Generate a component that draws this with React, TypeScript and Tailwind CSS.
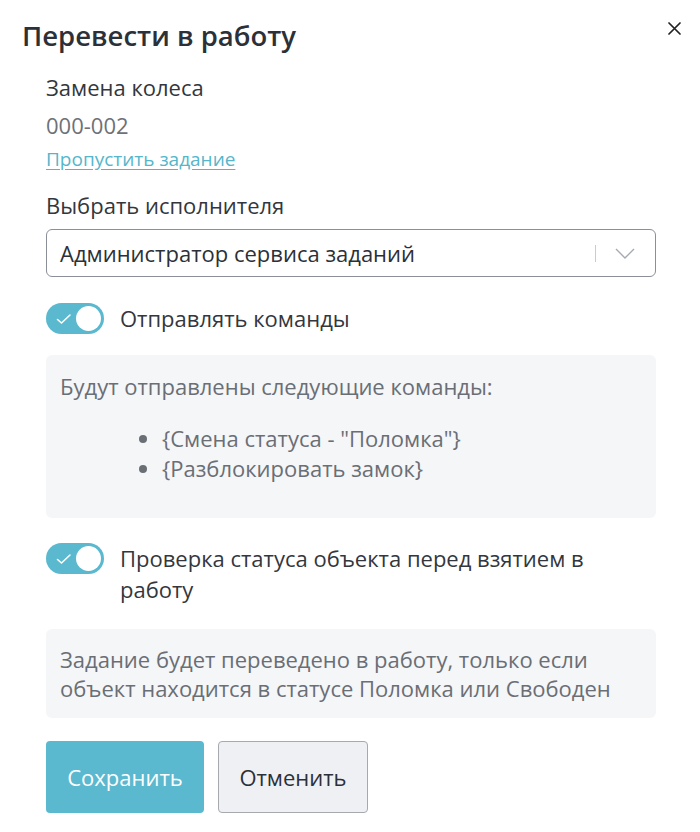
import React, { useState } from "react";

const font = { fontFamily: '"Open Sans", "Noto Sans", sans-serif' };

function Toggle({ on, onClick }: { on: boolean; onClick: () => void }) {
  return (
    <button
      type="button"
      onClick={onClick}
      className={
        on
          ? "relative shrink-0 w-[58px] h-[31px] rounded-full bg-[#5ab8cf] flex items-center"
          : "relative shrink-0 w-[58px] h-[31px] rounded-full bg-[#c9ced6] flex items-center"
      }
    >
      {on && (
        <svg className="ml-[10px]" width="16" height="12" viewBox="0 0 16 12" fill="none">
          <path d="M1.5 6.5 L5.5 10 L14 2" stroke="white" strokeWidth="1.6" strokeLinecap="round" strokeLinejoin="round" />
        </svg>
      )}
      <span
        className={
          on
            ? "absolute right-[3px] top-[3px] w-[25px] h-[25px] rounded-full bg-white"
            : "absolute left-[3px] top-[3px] w-[25px] h-[25px] rounded-full bg-white"
        }
      />
    </button>
  );
}

export default function App() {
  const [sendCommands, setSendCommands] = useState(true);
  const [checkStatus, setCheckStatus] = useState(true);

  return (
    <div style={font} className="w-[700px] h-[832px] bg-white relative text-[#33373d]">
      <button type="button" className="absolute right-[15px] top-[18px] p-1">
        <svg width="13" height="13" viewBox="0 0 13 13">
          <path d="M1 1 L12 12 M12 1 L1 12" stroke="#222" strokeWidth="1.7" strokeLinecap="round" />
        </svg>
      </button>

      <div className="px-[22px] pt-[17px]">
        <h2 className="text-[27.5px] leading-[38px] font-semibold text-[#2c3038]">Перевести в работу</h2>
      </div>

      <div className="pl-[46px] pr-[44px] pt-[18px]">
        <div className="text-[22px] leading-[28px]">Замена колеса</div>
        <div className="text-[22px] leading-[28px] mt-[10px] text-[#6d7178]">000-002</div>
        <a href="#" className="block text-[19px] leading-[22px] mt-[9px] text-[#55b6cb] underline underline-offset-[3px]">
          Пропустить задание
        </a>

        <div className="text-[22px] leading-[28px] mt-[21px]">Выбрать исполнителя</div>
        <div className="mt-[10px] h-[48px] border-[1.5px] border-[#8a8f98] rounded-[6px] flex items-center pl-[13px] pr-[20px]">
          <span className="flex-1 text-[22px] text-[#2c3038]">Администратор сервиса заданий</span>
          <span className="w-px h-[17px] bg-[#c8cbd0]" />
          <svg className="ml-[19px]" width="20" height="11" viewBox="0 0 20 11" fill="none">
            <path d="M1 1 L10 10 L19 1" stroke="#a5a9b0" strokeWidth="1.4" />
          </svg>
        </div>

        <div className="flex items-center gap-[16px] mt-[26px]">
          <Toggle on={sendCommands} onClick={() => setSendCommands(!sendCommands)} />
          <span className="text-[22px] leading-[31px]">Отправлять команды</span>
        </div>

        {sendCommands && (
          <div className="mt-[21px] h-[163px] bg-[#f5f6f8] rounded-[6px] px-[14px] pt-[16px] text-[22px] leading-[30px] text-[#6a6e75]">
            <div>Будут отправлены следующие команды:</div>
            <ul className="list-disc pl-[102px] mt-[22px] marker:text-[#6a6e75]">
              <li>{'{Смена статуса - "Поломка"}'}</li>
              <li>{"{Разблокировать замок}"}</li>
            </ul>
          </div>
        )}

        <div className="flex items-start gap-[16px] mt-[25px]">
          <Toggle on={checkStatus} onClick={() => setCheckStatus(!checkStatus)} />
          <span className="text-[22px] leading-[31px]">Проверка статуса объекта перед взятием в работу</span>
        </div>

        {checkStatus && (
          <div className="mt-[24px] h-[89px] bg-[#f5f6f8] rounded-[6px] px-[14px] pt-[16px] text-[22px] leading-[29px] text-[#6a6e75]">
            Задание будет переведено в работу, только если
            <br />
            объект находится в статусе Поломка или Свободен
          </div>
        )}

        <div className="flex gap-[14px] mt-[23px]">
          <button type="button" className="w-[158px] h-[72px] rounded-[4px] bg-[#5ab8cf] text-white text-[22px]">
            Сохранить
          </button>
          <button
            type="button"
            className="w-[150px] h-[72px] rounded-[4px] bg-[#eef0f4] border-[1.5px] border-[#a6a9ae] text-[#2c3038] text-[22px]"
          >
            Отменить
          </button>
        </div>
      </div>
    </div>
  );
}
